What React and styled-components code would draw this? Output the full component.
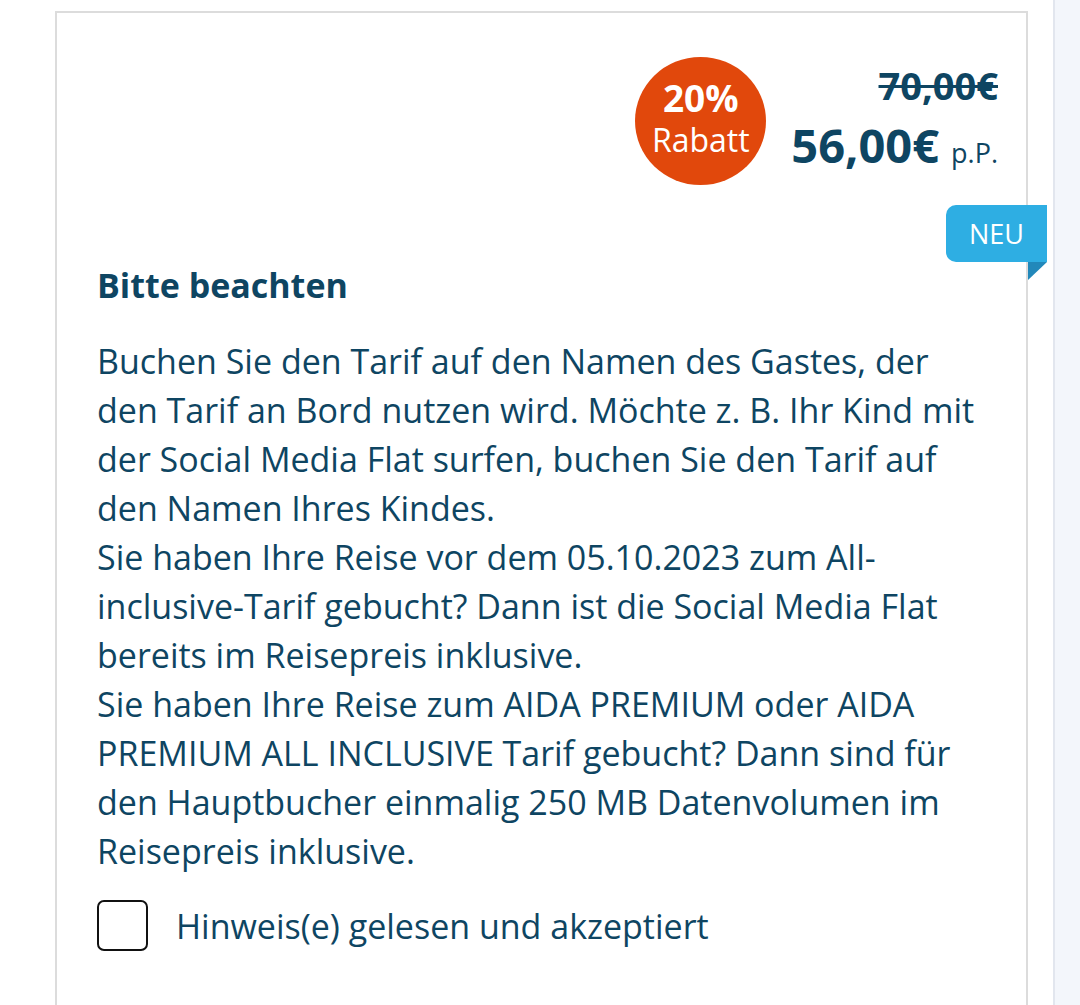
import React from "react";
import styled, { createGlobalStyle } from "styled-components";

const Global = createGlobalStyle`
  html, body { margin: 0; padding: 0; background: #fff; }
  body { font-family: "Open Sans", "Noto Sans", sans-serif; color: #0e4562; }
  * { box-sizing: border-box; }
`;

const Page = styled.div`
  display: flex;
  align-items: stretch;
  height: 1005px;
  overflow: hidden;
  padding-left: 55px;
  padding-top: 11px;
`;

const Card = styled.div`
  position: relative;
  width: 973px;
  flex: none;
  border: 2px solid #dcdcdc;
  border-bottom: none;
  padding: 44px 28px 0 40px;
`;

const Side = styled.div`
  flex: 1;
  margin-left: 25px;
  margin-top: -11px;
  background: #f3f6fb;
  border-left: 2px solid #e2e6ee;
`;

const PriceRow = styled.div`
  display: flex;
  justify-content: flex-end;
  align-items: center;
  gap: 25px;
`;

const Discount = styled.div`
  width: 131px;
  height: 128px;
  border-radius: 50%;
  background: #e1480c;
  color: #fff;
  display: flex;
  flex-direction: column;
  align-items: center;
  justify-content: center;
  padding-bottom: 4px;
`;

const DiscountPct = styled.span`
  display: block;
  font-weight: 700;
  font-size: 37px;
  line-height: 42px;
`;

const DiscountLabel = styled.span`
  display: block;
  font-weight: 400;
  font-size: 32px;
  line-height: 42px;
`;

const Prices = styled.div`
  display: flex;
  flex-direction: column;
  align-items: flex-end;
  gap: 4px;
`;

const OldPrice = styled.span`
  font-weight: 700;
  font-size: 38px;
  line-height: 52px;
  text-decoration: line-through;
  text-decoration-thickness: 3px;
`;

const NewPriceLine = styled.div`
  display: flex;
  align-items: baseline;
  gap: 12px;
  line-height: 60px;
`;

const NewPrice = styled.span`
  font-weight: 700;
  font-size: 47px;
`;

const PerPerson = styled.span`
  font-size: 27px;
`;

const NewBadge = styled.div`
  position: absolute;
  top: 192px;
  right: -21px;
  width: 101px;
  height: 57px;
  background: #2eaee3;
  color: #fff;
  font-size: 27px;
  display: flex;
  align-items: center;
  justify-content: center;
  border-radius: 10px 0 0 10px;

  &::after {
    content: "";
    position: absolute;
    right: 0;
    top: 100%;
    width: 0;
    height: 0;
    border-top: 18px solid #2288ba;
    border-right: 19px solid transparent;
  }
`;

const Heading = styled.h3`
  margin: 80px 0 0;
  font-weight: 700;
  font-size: 34px;
  line-height: 40px;
`;

const Body = styled.div`
  margin-top: 32px;
  padding-right: 20px;
  font-size: 34px;
  line-height: 49px;
`;

const Para = styled.p`
  margin: 0;
`;

const CheckRow = styled.label`
  display: flex;
  align-items: center;
  gap: 28px;
  margin-top: 24px;
  font-size: 34px;
`;

const Box = styled.span`
  width: 51px;
  height: 51px;
  border: 2px solid #111;
  border-radius: 7px;
  flex: none;
  background: #fff;
`;

export default function App() {
  return (
    <>
      <Global />
      <Page>
        <Card>
          <PriceRow>
            <Discount>
              <DiscountPct>20%</DiscountPct>
              <DiscountLabel>Rabatt</DiscountLabel>
            </Discount>
            <Prices>
              <OldPrice>70,00€</OldPrice>
              <NewPriceLine>
                <NewPrice>56,00€</NewPrice>
                <PerPerson>p.P.</PerPerson>
              </NewPriceLine>
            </Prices>
          </PriceRow>
          <NewBadge>NEU</NewBadge>
          <Heading>Bitte beachten</Heading>
          <Body>
            <Para>
              Buchen Sie den Tarif auf den Namen des Gastes, der den Tarif an Bord nutzen wird. Möchte z. B. Ihr Kind mit der Social Media Flat surfen, buchen Sie den Tarif auf den Namen Ihres Kindes.
            </Para>
            <Para>
              Sie haben Ihre Reise vor dem 05.10.2023 zum All-inclusive-Tarif gebucht? Dann ist die Social Media Flat bereits im Reisepreis inklusive.
            </Para>
            <Para>
              Sie haben Ihre Reise zum AIDA PREMIUM oder AIDA PREMIUM ALL INCLUSIVE Tarif gebucht? Dann sind für den Hauptbucher einmalig 250 MB Datenvolumen im Reisepreis inklusive.
            </Para>
          </Body>
          <CheckRow>
            <Box />
            Hinweis(e) gelesen und akzeptiert
          </CheckRow>
        </Card>
        <Side />
      </Page>
    </>
  );
}
